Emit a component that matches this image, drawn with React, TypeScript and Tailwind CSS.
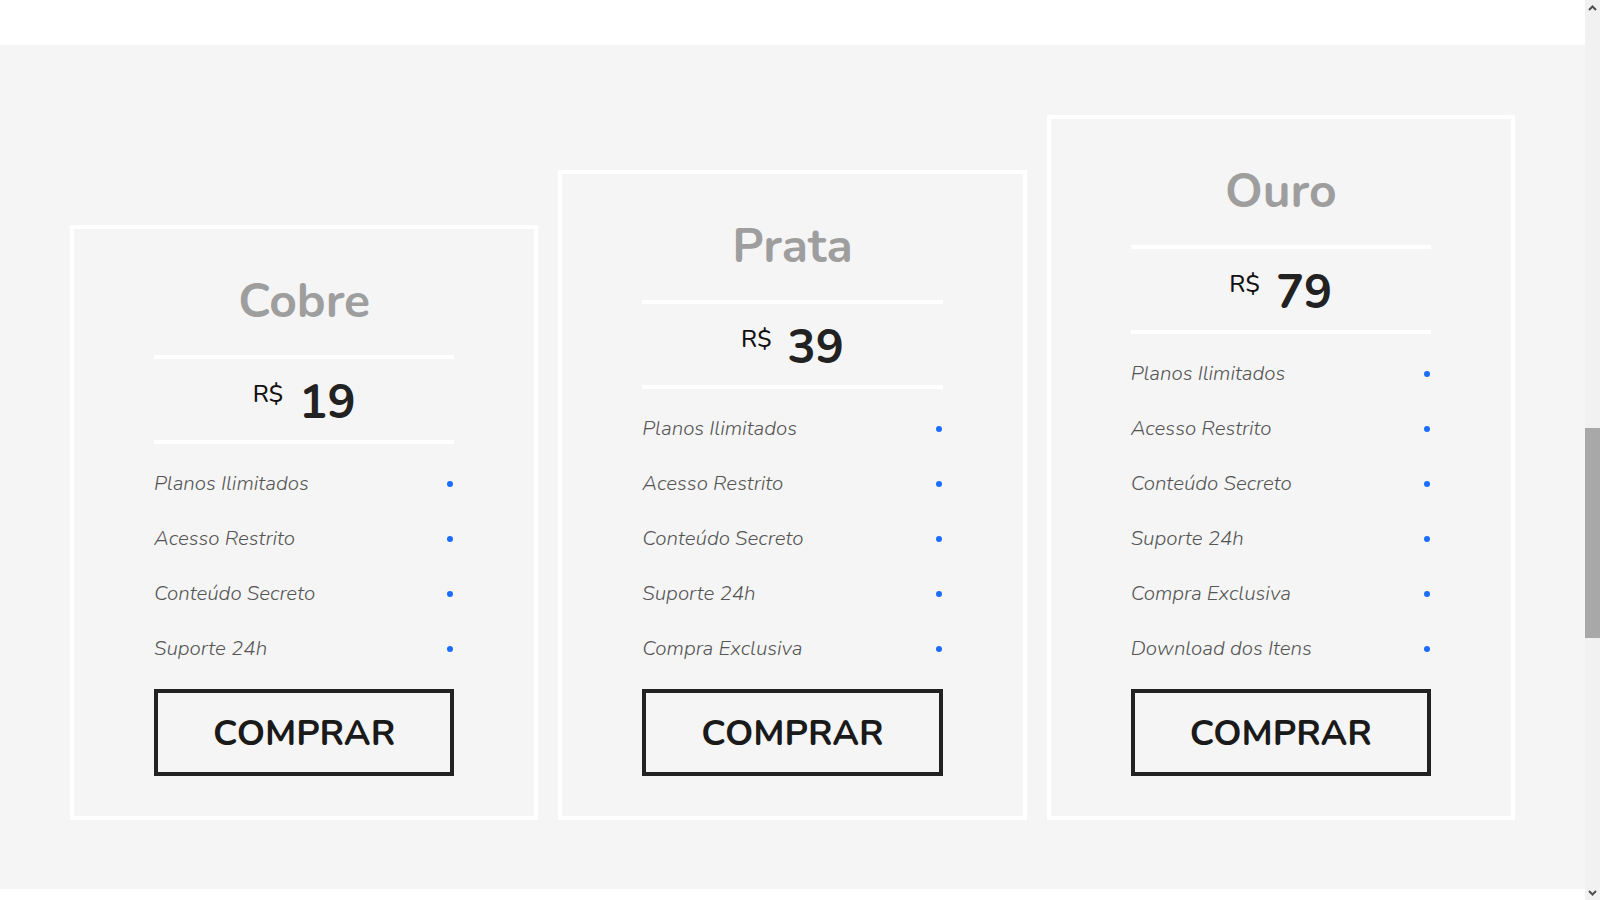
import React from "react";

type Plan = {
  name: string;
  price: string;
  features: string[];
};

const plans: Plan[] = [
  {
    name: "Cobre",
    price: "19",
    features: ["Planos Ilimitados", "Acesso Restrito", "Conteúdo Secreto", "Suporte 24h"],
  },
  {
    name: "Prata",
    price: "39",
    features: [
      "Planos Ilimitados",
      "Acesso Restrito",
      "Conteúdo Secreto",
      "Suporte 24h",
      "Compra Exclusiva",
    ],
  },
  {
    name: "Ouro",
    price: "79",
    features: [
      "Planos Ilimitados",
      "Acesso Restrito",
      "Conteúdo Secreto",
      "Suporte 24h",
      "Compra Exclusiva",
      "Download dos Itens",
    ],
  },
];

const PlanCard = ({ plan }: { plan: Plan }) => {
  return (
    <div className="flex-1 border-4 border-white px-[80px] pb-[40px]">
      <div className="h-[126px] flex items-center justify-center pt-[18px]">
        <h2 className="text-[48px] leading-none font-bold text-[#9e9e9e]">{plan.name}</h2>
      </div>
      <div className="h-[4px] bg-white"></div>
      <div className="h-[81px] flex items-center justify-center pt-[5px]">
        <span className="text-[24px] font-medium text-[#111] self-start mt-[18px] mr-[16px] leading-none">
          R$
        </span>
        <span className="text-[47px] font-bold text-[#222] leading-none">{plan.price}</span>
      </div>
      <div className="h-[4px] bg-white"></div>

      <ul className="mt-[12px]">
        {plan.features.map((f) => (
          <li key={f} className="h-[55px] flex items-center justify-between">
            <span className="italic font-light text-[20.5px] text-[#555]">{f}</span>
            <span className="w-[6px] h-[6px] rounded-full bg-[#1a6dff] mr-[1px]"></span>
          </li>
        ))}
      </ul>

      <button className="mt-[13px] w-full h-[87px] border-4 border-[#222] flex items-center justify-center pt-[2px] text-[36px] font-bold text-[#1a1a1a]">
        COMPRAR
      </button>
    </div>
  );
};

const ScrollBar = () => {
  return (
    <div className="w-[15px] h-full bg-[#f1f1f1] flex flex-col">
      <div className="h-[15px] flex items-center justify-center">
        <svg width="9" height="6" viewBox="0 0 9 6">
          <path d="M1 5 L4.5 1.5 L8 5" stroke="#505050" strokeWidth="2" fill="none" />
        </svg>
      </div>
      <div className="flex-1 relative">
        <div className="absolute left-0 right-0 top-[413px] h-[210px] bg-[#a8a8a8]"></div>
      </div>
      <div className="h-[15px] flex items-center justify-center">
        <svg width="9" height="6" viewBox="0 0 9 6">
          <path d="M1 1 L4.5 4.5 L8 1" stroke="#505050" strokeWidth="2" fill="none" />
        </svg>
      </div>
    </div>
  );
};

export default function App() {
  return (
    <div
      className="h-[900px] w-[1600px] flex overflow-hidden bg-white"
      style={{ fontFamily: "Nunito, Lato, 'Open Sans', sans-serif" }}
    >
      <div className="flex-1 flex flex-col">
        <div className="h-[45px] bg-white"></div>
        <section className="h-[844px] bg-[#f5f5f5] px-[70px] pt-[70px] pb-[69px] flex items-end gap-[20px]">
          {plans.map((p) => (
            <PlanCard key={p.name} plan={p} />
          ))}
        </section>
        <div className="flex-1 bg-white"></div>
      </div>
      <ScrollBar />
    </div>
  );
}
